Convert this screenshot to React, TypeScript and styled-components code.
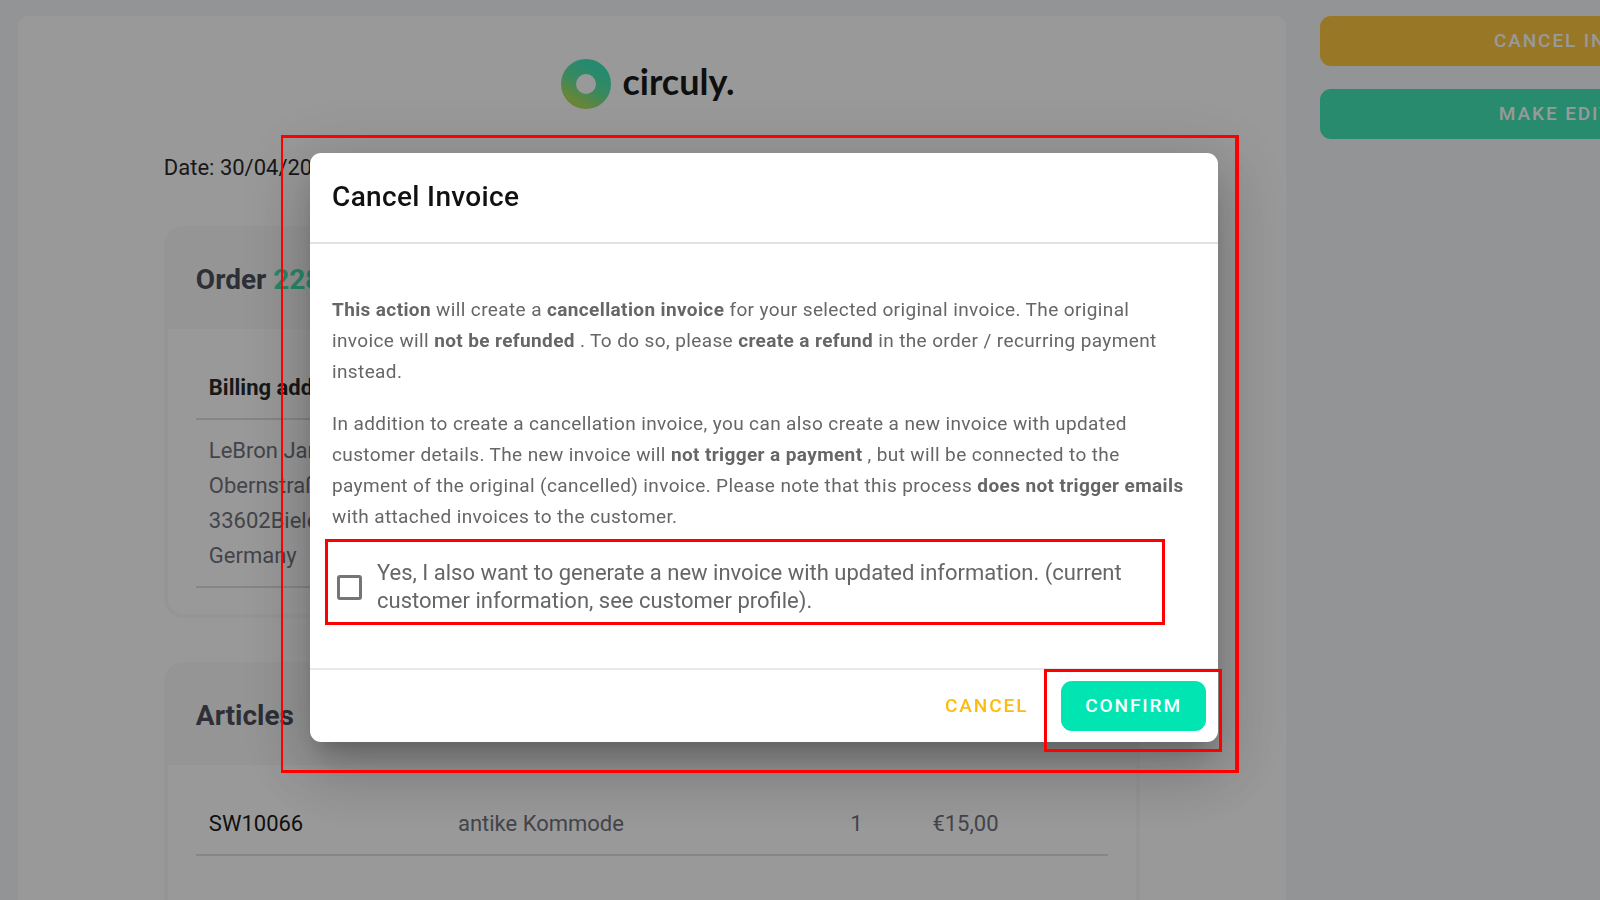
import React from "react";
import styled, { createGlobalStyle } from "styled-components";

const GlobalStyle = createGlobalStyle`
  *, *::before, *::after { box-sizing: border-box; }
  html, body { margin: 0; overflow: hidden; }
  body { font-family: Roboto, "Liberation Sans", sans-serif; background: #f3f5fa; }
  h1, h2, p { margin: 0; }
`;

const Page = styled.div`
  height: 100vh;
  overflow: hidden;
`;

const Shell = styled.div`
  display: grid;
  grid-template-columns: 7fr 3fr;
  gap: 34px;
  align-items: start;
  width: 117.6%;
  padding: 16px 18px;
`;

const InvoiceCard = styled.main`
  display: flex;
  flex-direction: column;
  align-items: center;
  padding: 43px 0 80px;
  border-radius: 11px;
  background: #fff;
`;

const Logo = styled.div`
  display: flex;
  align-items: center;
  gap: 11px;
  height: 50px;
  margin-right: 8px;
  color: #000;
  font-family: Lato, "Liberation Sans", sans-serif;
  font-size: 36px;
  font-weight: 700;
  line-height: 50px;
`;

const LogoName = styled.span`
  padding-bottom: 6px;
`;

const InvoiceBody = styled.div`
  display: flex;
  flex-direction: column;
  width: 77%;
  margin-top: 43px;
`;

const InvoiceDate = styled.p`
  margin-bottom: 43px;
  color: #111;
  font-size: 22px;
  line-height: 31px;
`;

const Section = styled.section`
  margin-bottom: 44px;
  border-radius: 20px;
  background: #f8f8f8;
  overflow: hidden;
`;

const SectionTitle = styled.h2`
  padding: 38px 32px 34px;
  color: #3a3c4a;
  font-size: 28px;
  font-weight: 700;
  line-height: 31px;
`;

const OrderLink = styled.a`
  color: #30e0a8;
  text-decoration: none;
`;

const SectionBody = styled.div<{ $space: number }>`
  padding: ${(p) => p.$space}px 28px 26px;
  border: 4px solid #f8f8f8;
  border-top: 0;
  border-radius: 0 0 20px 20px;
  background: #fff;
`;

const Table = styled.table`
  width: 100%;
  border-collapse: collapse;
  color: #626470;
  font-size: 22px;
  line-height: 35px;
  text-align: left;
  th, td { padding: 13px; border-bottom: 2px solid #dcdce4; }
  th { padding-top: 9px; color: #111; font-weight: 700; }
`;

const Cell = styled.td<{ $width?: number; $dark?: boolean }>`
  width: ${(p) => (p.$width ? `${p.$width}%` : "auto")};
  color: ${(p) => (p.$dark ? "#000" : "#626470")};
`;

const Actions = styled.aside`
  display: flex;
  flex-direction: column;
  gap: 23px;
  padding-right: 20px;
`;

const Button = styled.button<{ $bg: string; $color: string; $pad: number }>`
  height: 50px;
  padding: 0 ${(p) => p.$pad}px 2px;
  border: 0;
  border-radius: 11px;
  background: ${(p) => p.$bg};
  color: ${(p) => p.$color};
  font-family: inherit;
  font-size: 19px;
  font-weight: 500;
  letter-spacing: 0.1em;
  text-transform: uppercase;
  white-space: nowrap;
  cursor: pointer;
`;

const Overlay = styled.div`
  position: fixed;
  inset: 0;
  padding: 153px 382px 0 310px;
  background: rgba(33, 33, 33, 0.46);
`;

const Dialog = styled.div`
  position: relative;
  border-radius: 11px;
  background: #fff;
  box-shadow:
    0 15px 21px -10px rgba(0, 0, 0, 0.2),
    0 33px 53px 4px rgba(0, 0, 0, 0.14),
    0 13px 64px 11px rgba(0, 0, 0, 0.12);
`;

const DialogTitle = styled.h1`
  padding: 23px 22px 25px;
  border-bottom: 2px solid #e2e2e2;
  color: #111;
  font-size: 28px;
  font-weight: 500;
  letter-spacing: 0.0125em;
  line-height: 41px;
`;

const DialogBody = styled.div`
  display: flex;
  flex-direction: column;
  gap: 21px;
  padding: 50px 30px 43px 22px;
  color: #666;
  font-size: 19px;
  letter-spacing: 0.02em;
  line-height: 31px;
`;

const Option = styled.label`
  position: relative;
  display: flex;
  align-items: center;
  gap: 15px;
  width: 840px;
  max-width: 100%;
  margin: -14px 0 0 -7px;
  padding: 20px 20px 10px 12px;
  color: #666;
  font-size: 22px;
  letter-spacing: 0;
  line-height: 28px;
`;

const Checkbox = styled.input`
  flex: none;
  appearance: none;
  width: 25px;
  height: 25px;
  margin: 0;
  border: 3px solid #757575;
  border-radius: 3px;
  background: #fff;
`;

const DialogFooter = styled.div`
  display: flex;
  justify-content: flex-end;
  align-items: center;
  gap: 11px;
  padding: 11px 12px;
  border-top: 2px solid #e8e8e8;
`;

const Anchor = styled.span`
  position: relative;
  display: flex;
`;

const Highlight = styled.span<{ $inset: string; $border?: string }>`
  position: absolute;
  inset: ${(p) => p.$inset};
  border: solid #f00;
  border-width: ${(p) => p.$border ?? "3px"};
  pointer-events: none;
`;

export default function App() {
  return (
    <Page>
      <GlobalStyle />
      <Shell>
        <InvoiceCard>
          <Logo>
            <svg width="50" height="50" viewBox="0 0 50 50" aria-hidden="true">
              <defs>
                <linearGradient id="ring" x1="0.75" y1="0.1" x2="0.25" y2="1">
                  <stop offset="0" stopColor="#2ce4b0" />
                  <stop offset="0.5" stopColor="#50e092" />
                  <stop offset="1" stopColor="#a4dc50" />
                </linearGradient>
              </defs>
              <circle cx="25" cy="25" r="17.5" fill="none" stroke="url(#ring)" strokeWidth="15" />
            </svg>
            <LogoName>circuly.</LogoName>
          </Logo>
          <InvoiceBody>
            <InvoiceDate>Date: 30/04/2024</InvoiceDate>
            <Section>
              <SectionTitle>
                Order <OrderLink href="#order">22812</OrderLink>
              </SectionTitle>
              <SectionBody $space={32}>
                <Table>
                  <thead>
                    <tr>
                      <th scope="col">Billing address</th>
                    </tr>
                  </thead>
                  <tbody>
                    <tr>
                      <Cell>
                        LeBron James
                        <br />
                        Obernstraße
                        <br />
                        33602Bielefeld
                        <br />
                        Germany
                      </Cell>
                    </tr>
                  </tbody>
                </Table>
              </SectionBody>
            </Section>
            <Section>
              <SectionTitle>Articles</SectionTitle>
              <SectionBody $space={28}>
                <Table>
                  <tbody>
                    <tr>
                      <Cell $width={27.3} $dark>SW10066</Cell>
                      <Cell $width={43}>antike Kommode</Cell>
                      <Cell $width={9}>1</Cell>
                      <Cell>€15,00</Cell>
                    </tr>
                    <tr>
                      <Cell colSpan={4}>&nbsp;</Cell>
                    </tr>
                  </tbody>
                </Table>
              </SectionBody>
            </Section>
          </InvoiceBody>
        </InvoiceCard>
        <Actions>
          <Button type="button" $bg="#fec22c" $color="#fff" $pad={22}>Cancel invoice</Button>
          <Button type="button" $bg="#30e5ae" $color="#fff" $pad={22}>Make editable</Button>
        </Actions>
      </Shell>

      <Overlay>
        <Dialog role="dialog" aria-modal="true" aria-labelledby="dialog-title">
          <DialogTitle id="dialog-title">Cancel Invoice</DialogTitle>
          <DialogBody>
            <p>
              <b>This action</b> will create a <b>cancellation invoice</b> for your selected original
              invoice. The original invoice will <b>not be refunded</b> . To do so, please{" "}
              <b>create a refund</b> in the order / recurring payment instead.
            </p>
            <p>
              In addition to create a cancellation invoice, you can also create a new invoice with
              updated customer details. The new invoice will <b>not trigger a payment</b> , but will be
              connected to the payment of the original (cancelled) invoice. Please note that this
              process <b>does not trigger emails</b> with attached invoices to the customer.
            </p>
            <Option>
              <Checkbox type="checkbox" />
              <span>
                Yes, I also want to generate a new invoice with updated information. (current customer
                information, see customer profile).
              </span>
              <Highlight $inset="0" />
            </Option>
          </DialogBody>
          <DialogFooter>
            <Button type="button" $bg="transparent" $color="#fdbb10" $pad={22}>Cancel</Button>
            <Anchor>
              <Button type="button" $bg="#00e5b2" $color="#fff" $pad={24}>Confirm</Button>
              <Highlight $inset="-12px -16px -21px -17px" />
            </Anchor>
          </DialogFooter>
          <Highlight $inset="-18px -21px -31px -29px" $border="3px 4px 3px 2px" />
        </Dialog>
      </Overlay>
    </Page>
  );
}
